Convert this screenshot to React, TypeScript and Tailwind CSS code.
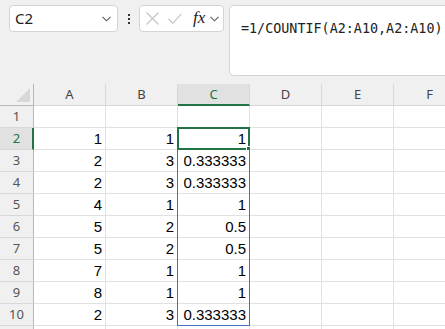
import React from 'react';

const cols = ['A', 'B', 'C', 'D', 'E', 'F'];

const rows: (string | number)[][] = [
    ['', '', ''],
    [1, 1, 1],
    [2, 3, '0.333333'],
    [2, 3, '0.333333'],
    [4, 1, 1],
    [5, 2, '0.5'],
    [5, 2, '0.5'],
    [7, 1, 1],
    [8, 1, 1],
    [2, 3, '0.333333'],
    ['', '', ''],
];

const Chevron: React.FC<{ className?: string }> = ({ className }) => (
    <svg className={className} width="9" height="6" viewBox="0 0 9 6" fill="none">
        <path d="M0.5 0.8 L4.5 4.8 L8.5 0.8" stroke="#5a5a5a" strokeWidth="1.1" />
    </svg>
);

const App: React.FC = () => {
    return (
        <div
            className="w-[445px] h-[329px] overflow-hidden bg-white"
            style={{ fontFamily: '"Noto Sans", "Open Sans", sans-serif' }}
        >
            {/* top bar */}
            <div className="h-[84px] bg-[#f0f0f0] flex items-start pt-[5px] pl-[9px] overflow-hidden">
                <div className="shrink-0 w-[109px] h-[27px] bg-white border border-[#d4d4d4] rounded-[4px] flex items-center justify-between pl-[5px] pr-[6px]">
                    <span className="text-[15px] text-[#222] leading-none">C2</span>
                    <Chevron />
                </div>
                <div className="shrink-0 w-[21px] h-[27px] flex flex-col items-center justify-center gap-[2px]">
                    <span className="w-[2px] h-[2px] bg-[#333]" />
                    <span className="w-[2px] h-[2px] bg-[#333]" />
                    <span className="w-[2px] h-[2px] bg-[#333]" />
                </div>
                <div className="shrink-0 w-[85px] h-[27px] bg-white border border-[#d4d4d4] rounded-[4px] flex items-center pl-[6px]">
                    <svg width="13" height="13" viewBox="0 0 13 13" fill="none">
                        <path d="M0.5 0.5 L12.5 12.5 M12.5 0.5 L0.5 12.5" stroke="#c4c4c4" strokeWidth="1.1" />
                    </svg>
                    <svg className="ml-[9px]" width="14" height="11" viewBox="0 0 14 11" fill="none">
                        <path d="M0.5 6 L4.8 10.2 L13.5 0.8" stroke="#c4c4c4" strokeWidth="1.1" />
                    </svg>
                    <span
                        className="ml-[11px] text-[17px] italic text-[#222] leading-none -mt-[2px]"
                        style={{ fontFamily: '"Liberation Serif", serif' }}
                    >
                        fx
                    </span>
                    <Chevron className="ml-[5px] mt-[1px]" />
                </div>
                <div className="shrink-0 ml-[5px] w-[240px] h-[71px] bg-white border border-[#d4d4d4] rounded-[5px] pl-[11px] pt-[9px]">
                    <span
                        className="text-[13.4px] text-[#222] leading-none whitespace-nowrap"
                        style={{ fontFamily: '"DejaVu Sans Mono", "Liberation Mono", monospace' }}
                    >
                        =1/COUNTIF(A2:A10,A2:A10)
                    </span>
                </div>
            </div>

            {/* sheet */}
            <div className="grid grid-cols-[34px_repeat(6,72px)] auto-rows-[22px]">
                {/* header row */}
                <div className="relative bg-[#f0f0f0] border-r border-b border-[#b8b8b8]">
                    <svg className="absolute right-[3px] bottom-[3px]" width="14" height="14" viewBox="0 0 14 14">
                        <path d="M14 0 L14 14 L0 14 Z" fill="#d8d8d8" />
                    </svg>
                </div>
                {cols.map((c) => (
                    <div
                        key={c}
                        className={`flex items-center justify-center text-[13px] border-r border-b ${
                            c === 'C'
                                ? 'bg-[#e1e1e1] border-b-[#217346] border-b-2 border-r-[#d8d8d8] text-[#217346] pt-[1px]'
                                : 'bg-[#f0f0f0] border-[#d8d8d8] text-[#444]'
                        }`}
                    >
                        {c}
                    </div>
                ))}

                {rows.map((r, i) => {
                    const n = i + 1;
                    return (
                        <React.Fragment key={n}>
                            <div
                                className={`flex items-center justify-center text-[13px] border-b border-[#d8d8d8] ${
                                    n === 2
                                        ? 'bg-[#e1e1e1] text-[#217346] border-r-2 border-r-[#217346] pl-[1px]'
                                        : 'bg-[#f0f0f0] text-[#555] border-r border-r-[#b8b8b8]'
                                }`}
                            >
                                {n <= 10 ? n : ''}
                            </div>
                            {cols.map((c, j) => {
                                const v = j < 3 ? r[j] : '';
                                const inRange = c === 'C' && n >= 2 && n <= 10;
                                return (
                                    <div
                                        key={c}
                                        className="relative flex items-center justify-end pr-[3px] text-[15px] text-black border-r border-b border-[#e1e1e1]"
                                        style={{ fontFamily: '"Liberation Sans", Arial, sans-serif' }}
                                    >
                                        {inRange && n > 2 && (
                                            <div
                                                className={`absolute -left-px -right-px -top-px -bottom-px ${
                                                    n === 10 ? 'border-b' : ''
                                                } border-l border-r border-[#4472c4] pointer-events-none`}
                                            />
                                        )}
                                        {c === 'C' && n === 2 && (
                                            <div className="absolute -left-px -top-px -right-px -bottom-px border-2 border-[#217346] pointer-events-none">
                                                <span className="absolute -right-[3px] -bottom-[3px] w-[5px] h-[5px] bg-[#217346] border border-white" />
                                            </div>
                                        )}
                                        <span className="relative leading-none">{v}</span>
                                    </div>
                                );
                            })}
                        </React.Fragment>
                    );
                })}
            </div>
        </div>
    );
};

export default App;
